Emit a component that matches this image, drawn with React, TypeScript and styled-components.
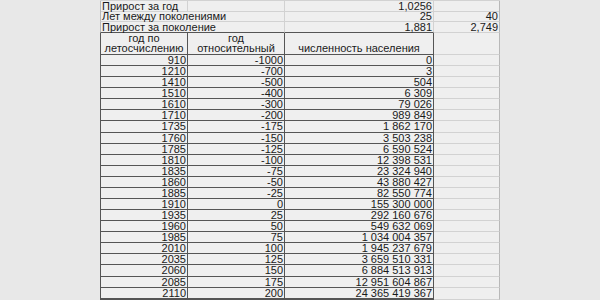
import styled, { createGlobalStyle } from "styled-components";

const GlobalStyle = createGlobalStyle`
  html, body {
    margin: 0;
    padding: 0;
    background: #e8e8e8;
  }
`;

const DARK = "#555555";
const FAINT = "#d2d2d2";
const EDGE = "#b8b8b8";

const Page = styled.div`
  width: 600px;
  height: 300px;
  overflow: hidden;
  display: flex;
  padding-left: 100px;
  box-sizing: border-box;
`;

const Sheet = styled.div`
  width: 400px;
  background: #efefef;
  border-top: 1px solid ${FAINT};
  font-family: "Liberation Sans", Arial, sans-serif;
  font-size: 11px;
  color: #1a1a1a;
`;

const Row = styled.div<{ $h: number }>`
  display: grid;
  grid-template-columns: 88px 97px 149px 66px;
  height: ${(p) => p.$h}px;
`;

const Cell = styled.div<{
  $align?: "left" | "right";
  $span?: number;
  $bottom?: string;
  $bottomWidth?: number;
  $right?: string;
  $left?: string;
}>`
  grid-column: span ${(p) => p.$span ?? 1};
  box-sizing: border-box;
  border-bottom: ${(p) => p.$bottomWidth ?? 1}px solid ${(p) => p.$bottom ?? FAINT};
  border-right: 1px solid ${(p) => p.$right ?? FAINT};
  border-left: ${(p) => (p.$left ? `1px solid ${p.$left}` : "none")};
  padding: 0 1px;
  line-height: 10px;
  white-space: nowrap;
  display: flex;
  align-items: flex-start;
  justify-content: ${(p) => (p.$align === "left" ? "flex-start" : "flex-end")};
`;

const HeadCell = styled.div<{ $valign?: "center" | "end"; $left?: boolean }>`
  box-sizing: border-box;
  border-bottom: 1px solid ${DARK};
  border-right: 1px solid ${DARK};
  border-left: ${(p) => (p.$left ? `1px solid ${DARK}` : "none")};
  display: flex;
  flex-direction: column;
  justify-content: ${(p) => (p.$valign === "end" ? "flex-end" : "center")};
  align-items: center;
  text-align: center;
  line-height: 10px;
  padding: 0 0 1px;
`;

const EmptyCell = styled.div`
  box-sizing: border-box;
  border-bottom: 1px solid ${FAINT};
  border-right: 1px solid ${EDGE};
`;

const summary = [
  { label: "Прирост за год", c: "1,0256", d: "", split: true },
  { label: "Лет между поколениями", c: "25", d: "40", split: false },
  { label: "Прирост за поколение", c: "1,881", d: "2,749", split: false },
];

const data: [string, string, string][] = [
  ["910", "-1000", "0"],
  ["1210", "-700", "3"],
  ["1410", "-500", "504"],
  ["1510", "-400", "6 309"],
  ["1610", "-300", "79 026"],
  ["1710", "-200", "989 849"],
  ["1735", "-175", "1 862 170"],
  ["1760", "-150", "3 503 238"],
  ["1785", "-125", "6 590 524"],
  ["1810", "-100", "12 398 531"],
  ["1835", "-75", "23 324 940"],
  ["1860", "-50", "43 880 427"],
  ["1885", "-25", "82 550 774"],
  ["1910", "0", "155 300 000"],
  ["1935", "25", "292 160 676"],
  ["1960", "50", "549 632 069"],
  ["1985", "75", "1 034 004 357"],
  ["2010", "100", "1 945 237 679"],
  ["2035", "125", "3 659 510 331"],
  ["2060", "150", "6 884 513 913"],
  ["2085", "175", "12 951 604 867"],
  ["2110", "200", "24 365 419 367"],
];

export default function App() {
  return (
    <Page>
      <GlobalStyle />
      <Sheet>
        {summary.map((r, i) => {
          const bottom = i === summary.length - 1 ? DARK : FAINT;
          return (
            <Row key={r.label} $h={i === 0 ? 10 : 11}>
              {r.split ? (
                <>
                  <Cell $align="left" $left={EDGE} $bottom={bottom}>
                    {r.label}
                  </Cell>
                  <Cell $bottom={bottom} />
                </>
              ) : (
                <Cell $align="left" $span={2} $left={EDGE} $bottom={bottom}>
                  {r.label}
                </Cell>
              )}
              <Cell $bottom={bottom}>{r.c}</Cell>
              <Cell $right={EDGE}>{r.d}</Cell>
            </Row>
          );
        })}
        <Row $h={22}>
          <HeadCell $left>
            <span>год по</span>
            <span>летосчислению</span>
          </HeadCell>
          <HeadCell>
            <span>год</span>
            <span>относительный</span>
          </HeadCell>
          <HeadCell $valign="end">численность населения</HeadCell>
          <EmptyCell />
        </Row>
        {data.map(([year, rel, pop], i) => {
          const w = i === data.length - 1 ? 2 : 1;
          return (
            <Row key={year} $h={11.09}>
              <Cell $left={DARK} $right={DARK} $bottom={DARK} $bottomWidth={w}>
                {year}
              </Cell>
              <Cell $right={DARK} $bottom={DARK} $bottomWidth={w}>
                {rel}
              </Cell>
              <Cell $right={DARK} $bottom={DARK} $bottomWidth={w}>
                {pop}
              </Cell>
              <EmptyCell />
            </Row>
          );
        })}
      </Sheet>
    </Page>
  );
}
